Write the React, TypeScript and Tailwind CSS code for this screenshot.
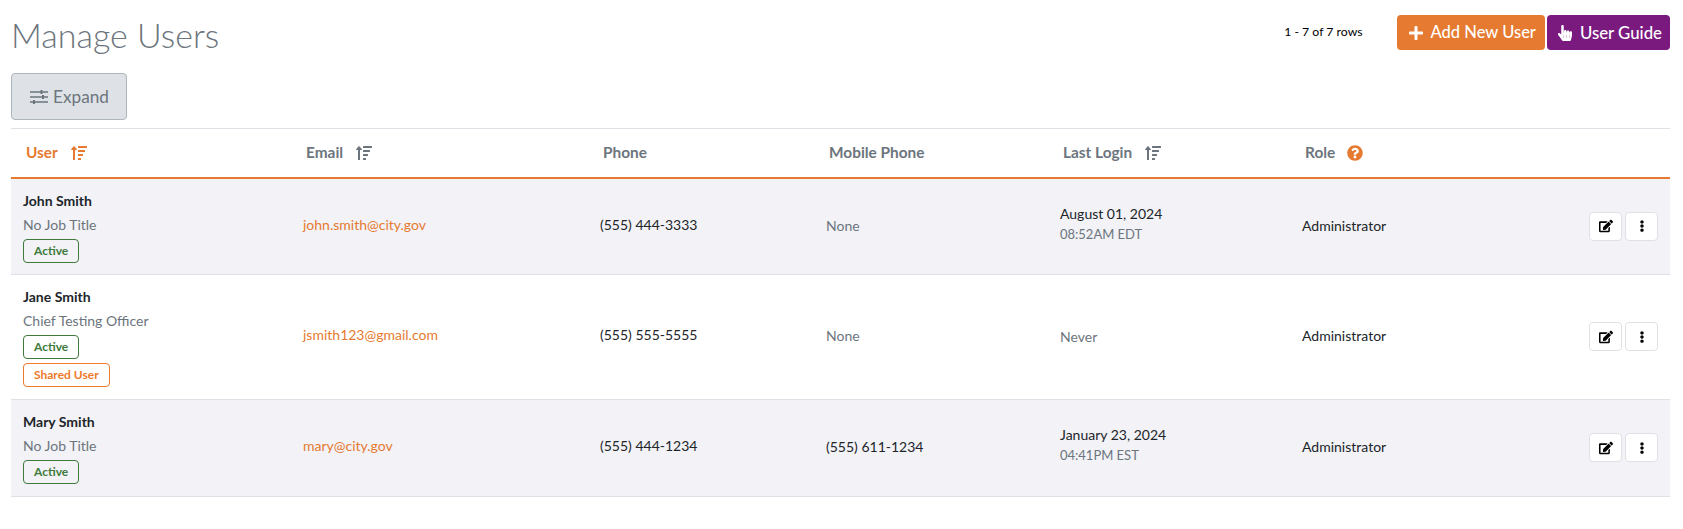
import { FaSortAmountUp, FaPlus, FaHandPointer, FaEdit, FaEllipsisV, FaQuestionCircle } from "react-icons/fa";

type Row = {
  name: string;
  title: string;
  email: string;
  phone: string;
  mobile: string;
  date?: string;
  time?: string;
  shared?: boolean;
  shade: boolean;
  bottom: string;
};

const rows: Row[] = [
  { name: "John Smith", title: "No Job Title", email: "john.smith@city.gov", phone: "(555) 444-3333", mobile: "None", date: "August 01, 2024", time: "08:52AM EDT", shade: true, bottom: "pb-[11px]" },
  { name: "Jane Smith", title: "Chief Testing Officer", email: "jsmith123@gmail.com", phone: "(555) 555-5555", mobile: "None", shared: true, shade: false, bottom: "pb-[12px]" },
  { name: "Mary Smith", title: "No Job Title", email: "mary@city.gov", phone: "(555) 444-1234", mobile: "(555) 611-1234", date: "January 23, 2024", time: "04:41PM EST", shade: true, bottom: "pb-[12px]" },
];

function Sliders() {
  return (
    <svg width="18" height="16" viewBox="0 0 18 16" fill="none" className="mr-[5px] ml-[1px]">
      <path d="M0 3h18M0 8h18M0 13h18" stroke="#6c757d" strokeWidth="1.3" />
      <rect x="10.5" y="1" width="2" height="4" fill="#6c757d" />
      <rect x="12" y="6" width="2" height="4" fill="#6c757d" />
      <rect x="3" y="11" width="2" height="4" fill="#6c757d" />
    </svg>
  );
}

function Head({ label, sort, active, help, w }: { label: string; sort?: boolean; active?: boolean; help?: boolean; w: string }) {
  return (
    <th className={`${w} h-[49px] pl-[15px] pr-0 text-left text-[15.4px] font-bold ${active ? "text-[#e57a30]" : "text-[#6c757d]"}`}>
      <span className="inline-flex items-center">
        {label}
        {sort && <FaSortAmountUp className="ml-[13px] text-[16px]" />}
        {help && <FaQuestionCircle className="ml-[12px] text-[16px] text-[#e57a30]" />}
      </span>
    </th>
  );
}

function Tag({ color, children }: { color: string; children: string }) {
  return (
    <div className={`${color} flex h-[24px] w-fit items-center rounded-[4px] border bg-transparent px-[10px] text-[12px] font-bold`}>
      {children}
    </div>
  );
}

export default function App() {
  return (
    <div className="min-h-[529px] bg-white pl-[11px] pr-[13px] font-['Lato','Liberation_Sans',sans-serif] text-[14px] text-[#212529]">
      <div className="flex h-[73px] items-start">
        <h1 className="mt-[13px] text-[34px] leading-[44px] font-light text-[#6c757d]">Manage Users</h1>
        <div className="ml-auto mt-[15px] flex items-center">
          <span className="mr-[34px] text-[12.25px] text-black">1 - 7 of 7 rows</span>
          <button className="flex h-[35px] items-center rounded-[4px] bg-[#e57a30] pr-[9px] pl-[11px] text-[16.5px] font-medium text-white">
            <FaPlus className="mr-[7px] text-[16px]" />
            Add New User
          </button>
          <button className="ml-[2px] flex h-[35px] items-center rounded-[4px] bg-[#7a1a7f] pr-[8px] pl-[10px] text-[16.8px] font-medium text-white">
            <FaHandPointer className="mr-[7px] text-[16px]" />
            User Guide
          </button>
        </div>
      </div>
      <button className="flex h-[47px] w-[116px] items-center justify-center rounded-[4px] border border-[#adb5bd] bg-[#dee2e6] text-[17.2px] text-[#6c757d]">
        <Sliders />
        Expand
      </button>
      <table className="mt-[8px] w-full table-fixed border-collapse border-t border-[#dee2e6]">
        <thead>
          <tr className="border-b-2 border-[#e57a30]">
            <Head w="w-[280px]" label="User" sort active />
            <Head w="w-[297px]" label="Email" sort />
            <Head w="w-[226px]" label="Phone" />
            <Head w="w-[234px]" label="Mobile Phone" />
            <Head w="w-[242px]" label="Last Login" sort />
            <Head w="w-[260px]" label="Role" help />
            <th />
          </tr>
        </thead>
        <tbody>
          {rows.map((r) => (
            <tr key={r.name} className={`border-b border-[#dee2e6] ${r.shade ? "bg-[#f2f2f7]" : "bg-white"}`}>
              <td className={`pt-[11px] pl-[12px] align-top ${r.bottom}`}>
                <div className="text-[14px] leading-[21px] font-bold">{r.name}</div>
                <div className="mt-[3px] text-[14px] leading-[21px] text-[#6c757d]">{r.title}</div>
                <div className="mt-[4px] flex flex-col gap-[4px]">
                  <Tag color="border-[#3e7a3a] text-[#3e7a3a]">Active</Tag>
                  {r.shared && <Tag color="border-[#ee7a2b] text-[#ee7a2b]">Shared User</Tag>}
                </div>
              </td>
              <td className="pb-[4px] pl-[12px] text-[#e57a30]">{r.email}</td>
              <td className="pb-[4px] pl-[12px] text-[#212529]">{r.phone}</td>
              <td className={`pb-[2px] pl-[12px] ${r.mobile === "None" ? "text-[#6c757d]" : "text-[#212529]"}`}>{r.mobile}</td>
              <td className={`pl-[12px] ${r.date ? "pb-[5px]" : "pb-[1px]"}`}>
                {r.date ? (
                  <>
                    <div className="leading-[21px] text-[#212529]">{r.date}</div>
                    <div className="text-[13px] leading-[21px] text-[#6c757d]">{r.time}</div>
                  </>
                ) : (
                  <span className="text-[#6c757d]">Never</span>
                )}
              </td>
              <td className="pb-[2px] pl-[12px] text-[#212529]">Administrator</td>
              <td>
                <div className="mr-[12px] flex justify-end gap-[3px]">
                  <button className="flex h-[29px] w-[33px] items-center justify-center rounded-[4px] border border-[#dee2e6] bg-white text-black">
                    <FaEdit className="text-[14px]" />
                  </button>
                  <button className="flex h-[29px] w-[33px] items-center justify-center rounded-[4px] border border-[#dee2e6] bg-white text-black">
                    <FaEllipsisV className="text-[12px]" />
                  </button>
                </div>
              </td>
            </tr>
          ))}
        </tbody>
      </table>
    </div>
  );
}
